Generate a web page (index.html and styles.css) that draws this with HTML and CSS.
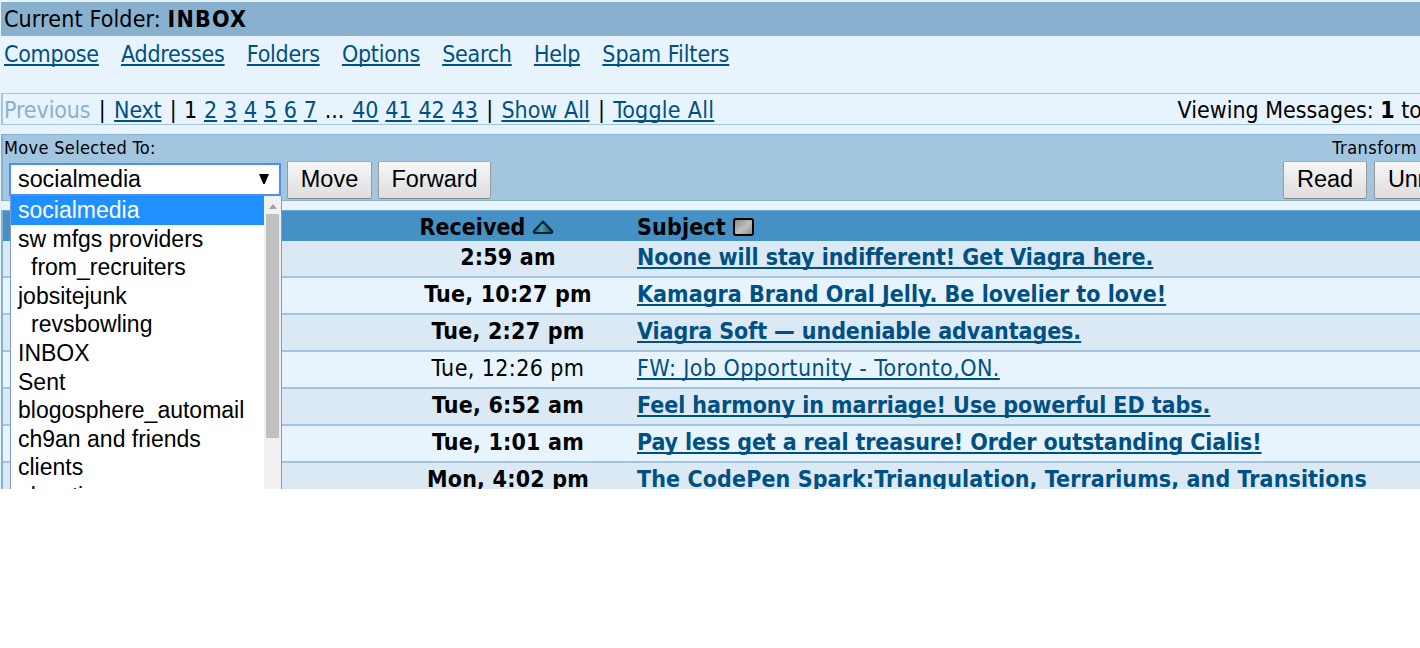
FILE: index.html
```html
<!DOCTYPE html>
<html lang="en">
<head>
<meta charset="utf-8">
<title>INBOX</title>
<link rel="stylesheet" href="styles.css">
</head>
<body>
<main class="mail">
  <header class="folder">Current Folder: <b>INBOX</b></header>
  <nav class="menu">
    <a>Compose</a><a>Addresses</a><a>Folders</a><a>Options</a><a>Search</a><a>Help</a><a class="spam">Spam Filters</a>
  </nav>
  <section class="pager">
    <div class="pages"><span class="off">Previous</span> <i>|</i> <a class="next">Next</a> <i>|</i> <span class="current">1</span> <a>2</a> <a>3</a> <a>4</a> <a>5</a> <a>6</a> <a>7</a> <span class="dots">...</span> <a>40</a> <a>41</a> <a>42</a> <a>43</a> <i>|</i> <a>Show All</a> <i>|</i> <a class="toggle">Toggle All</a></div>
    <div class="viewing">Viewing Messages: <b>1</b> to</div>
  </section>
  <section class="tools">
    <div class="move">
      <div class="label">Move Selected To:</div>
      <div class="controls">
        <div class="select">
          <span>socialmedia</span>
          <svg class="arrow" width="10" height="11" viewBox="0 0 10 11"><path d="M0 0h10L5.7 10H4.3z"/></svg>
          <div class="dropdown">
            <ul>
              <li class="selected">socialmedia</li>
              <li>sw mfgs providers</li>
              <li class="nested">from_recruiters</li>
              <li>jobsitejunk</li>
              <li class="nested">revsbowling</li>
              <li>INBOX</li>
              <li>Sent</li>
              <li>blogosphere_automail</li>
              <li>ch9an and friends</li>
              <li>clients</li>
              <li>elvesti</li>
            </ul>
            <div class="scroll">
              <svg width="8" height="5" viewBox="0 0 8 5"><path d="M0 5L4 0l4 5z"/></svg>
              <div class="thumb"></div>
            </div>
          </div>
        </div>
        <button class="b-move">Move</button>
        <button class="b-forward">Forward</button>
      </div>
    </div>
    <div class="transform">
      <div class="label">Transform</div>
      <div class="controls"><button class="b-read">Read</button><button class="b-unread">Unread</button></div>
    </div>
  </section>
  <section class="list">
    <div class="row head">
      <div class="date">Received <svg class="sort" width="22" height="15" viewBox="0 0 22 15"><defs><linearGradient id="teal"><stop offset="0" stop-color="#0c5566"/><stop offset=".4" stop-color="#4b9dac"/><stop offset="1" stop-color="#064655"/></linearGradient></defs><path d="M11 1.5L20 11Q21 13 19 13H3Q1 13 2 11Z" fill="url(#teal)" stroke="#06242b" stroke-width="2" stroke-linejoin="round"/></svg></div>
      <div class="subject">Subject <svg class="box" width="21" height="18" viewBox="0 0 21 18"><defs><linearGradient id="gray" x2="1" y2="1"><stop offset="0" stop-color="#858585"/><stop offset=".55" stop-color="#c0c0c0"/><stop offset="1" stop-color="#888"/></linearGradient></defs><rect x="1" y="1" width="19" height="16" rx="2" fill="url(#gray)" stroke="#000" stroke-width="2"/></svg></div>
    </div>
    <div class="row"><div class="date">2:59 am</div><a class="subject s1">Noone will stay indifferent! Get Viagra here.</a></div>
    <div class="row"><div class="date">Tue, 10:27 pm</div><a class="subject s2">Kamagra Brand Oral Jelly. Be lovelier to love!</a></div>
    <div class="row"><div class="date">Tue, 2:27 pm</div><a class="subject s3">Viagra Soft — undeniable advantages.</a></div>
    <div class="row read"><div class="date">Tue, 12:26 pm</div><a class="subject s4">FW: Job Opportunity - Toronto,ON.</a></div>
    <div class="row"><div class="date">Tue, 6:52 am</div><a class="subject s5">Feel harmony in marriage! Use powerful ED tabs.</a></div>
    <div class="row"><div class="date">Tue, 1:01 am</div><a class="subject s6">Pay less get a real treasure! Order outstanding Cialis!</a></div>
    <div class="row"><div class="date">Mon, 4:02 pm</div><a class="subject s7">The CodePen Spark:Triangulation, Terrariums, and Transitions</a></div>
  </section>
</main>
</body>
</html>
```
FILE: styles.css
```css
* { box-sizing: border-box; }
body { margin: 0; background: #fff; overflow: hidden; }
.mail {
  height: 489px; overflow: hidden; padding: 2px 0 0 1px; background: #e8f4fd; color: #000;
  font: 23px/34px "DejaVu Sans Condensed", "DejaVu Sans", sans-serif; font-stretch: condensed; white-space: nowrap;
}
a { color: #005083; text-decoration: underline; text-decoration-thickness: 2px; text-underline-offset: 2px; text-decoration-skip-ink: none; }
.folder { height: 34px; padding-left: 3px; background: #88b1d0; letter-spacing: .15px; }
.folder b { letter-spacing: 1.2px; }
.menu { display: flex; gap: 22.2px; height: 57px; padding: 1px 3px 0; letter-spacing: -.25px; }
.menu .spam { letter-spacing: -.05px; }
.pager { display: flex; justify-content: space-between; height: 32px; padding-left: 1px; line-height: 32px; border: 1px solid #a2c6e0; border-left-width: 2px; border-right: 0; }
.pages { word-spacing: .2px; }
.pages i { margin: 0 1.5px; font-style: normal; }
.pages .off { color: #88b1d0; letter-spacing: -.1px; }
.pages .next { letter-spacing: -.2px; }
.pages .current { margin-left: -1px; }
.pages .dots { margin: 0 1px; }
.pages .toggle { letter-spacing: .25px; }
.viewing { margin-right: -2px; }
.tools { display: flex; justify-content: space-between; height: 67px; margin-top: 9px; border: 1px solid #88b1d0; border-left-width: 2px; border-right: 0; background: #a2c6e0; }
.label { height: 26px; padding-left: 1px; font-size: 18px; line-height: 26px; letter-spacing: .33px; }
.controls { display: flex; align-items: center; height: 38px; font: 24px "Liberation Sans", sans-serif; }
button { flex: none; height: 38px; padding: 0 0 1px; border: 1px solid #999; border-color: #aaa #999 #888; border-radius: 2px; background: linear-gradient(#f7f7f7, #ddd); color: #000; font: 23.5px "Liberation Sans", sans-serif; }
.b-move { width: 85px; margin-left: 6px; }
.b-forward { width: 113px; margin-left: 6px; }
.b-read { width: 84px; }
.b-unread { width: 110px; margin-left: 7px; padding-left: 13px; text-align: left; letter-spacing: -.3px; }
.transform { width: 137px; overflow: hidden; }
.transform .label { padding: 0 3px 0 0; text-align: right; letter-spacing: .5px; }
.select { position: relative; display: flex; align-items: center; justify-content: space-between; width: 272px; height: 33px; margin: 0 0 1px 6px; padding: 0 10px 0 7px; border: 2px solid #4c8ffb; background: #fff; font-size: 23.3px; }
.dropdown { position: absolute; z-index: 1; left: -1px; top: 31px; display: flex; width: 272px; height: 294px; overflow: hidden; border: 1px solid #7a9dd8; border-width: 0 1px; background: #fff; font-size: 23px; }
.dropdown ul { flex: 1; margin: 0; padding: 0; list-style: none; line-height: 28.6px; }
.dropdown li { height: 28.6px; padding-left: 7px; }
.dropdown .nested { padding-left: 20px; }
.dropdown .selected { background: #1e90ff; color: #fff; }
.scroll { display: flex; flex-direction: column; align-items: center; width: 17px; padding-top: 8px; background: #f1f1f1; fill: #a3a3a3; }
.thumb { width: 13px; height: 224px; margin-top: 5px; background: #c1c1c1; }
.list { margin-top: 9px; border-left: 2px solid #88b1d0; font-weight: bold; }
.row { display: grid; grid-template-columns: 376px 258px auto; grid-template-areas: ". date subject"; height: 37px; border-bottom: 2px solid #a2c6e0; line-height: 33px; background: #e8f4fd; }
.row:nth-child(even) { background: #dbe9f4; }
.row.head { height: 31px; border-top: 1px solid #70a7cf; border-bottom: 0; background: #4590c5; line-height: 32px; }
.row.read { font-weight: normal; }
.date { grid-area: date; text-align: center; letter-spacing: .2px; }
.read .date { letter-spacing: .4px; }
.head .date { padding-right: 42px; letter-spacing: 0; }
.subject { grid-area: subject; justify-self: start; }
.head .subject { letter-spacing: .15px; }
.s1 { letter-spacing: -.05px; }
.s2 { letter-spacing: .03px; }
.s3 { letter-spacing: -.08px; }
.s4 { letter-spacing: .43px; }
.s5 { letter-spacing: -.04px; }
.s6 { letter-spacing: -.13px; }
.s7 { letter-spacing: .1px; }
.sort { margin-left: 0; }
.box { vertical-align: -1px; }
```
